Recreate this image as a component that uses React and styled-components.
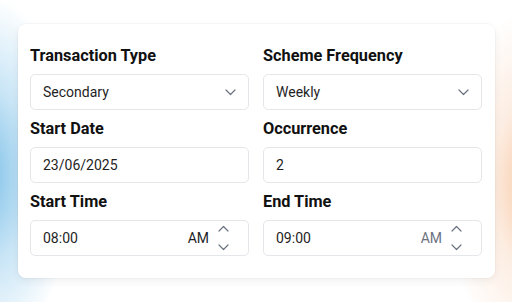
import React from "react";
import styled, { createGlobalStyle } from "styled-components";

const Global = createGlobalStyle`
  html, body { margin: 0; padding: 0; }
  body {
    width: 512px;
    height: 302px;
    overflow: hidden;
    font-family: Roboto, "Liberation Sans", sans-serif;
    background:
      radial-gradient(ellipse 90px 180px at -15px 175px, rgba(125, 192, 232, 1), rgba(165, 212, 240, 0.6) 50%, rgba(255,255,255,0) 100%),
      radial-gradient(ellipse 95px 180px at 540px 185px, rgba(247, 192, 150, 1), rgba(250, 218, 195, 0.5) 50%, rgba(255,255,255,0) 100%),
      #ffffff;
  }
`;

const Page = styled.div`
  padding: 24px 17px 24px 18px;
  box-sizing: border-box;
  width: 512px;
  height: 302px;
`;

const Card = styled.div`
  background: #ffffff;
  border-radius: 8px;
  box-shadow: 0 0 0 1px rgba(0, 0, 0, 0.025), 0 3px 8px rgba(0, 0, 0, 0.06);
  padding: 21px 13px 22px 12px;
  display: grid;
  grid-template-columns: 219px 219px;
  column-gap: 14px;
  row-gap: 8px;
`;

const Field = styled.div`
  display: flex;
  flex-direction: column;
  gap: 8px;
`;

const Label = styled.div`
  font-size: 16.3px;
  font-weight: 700;
  color: #111111;
  line-height: 21px;
  height: 21px;
`;

const Box = styled.div`
  height: 36px;
  box-sizing: border-box;
  border: 1px solid #e4e6ea;
  border-radius: 5px;
  background: #ffffff;
  display: flex;
  align-items: center;
  padding: 0 10px 0 12px;
  font-size: 14px;
  color: #1f1f1f;
`;

const Value = styled.span`
  flex: 1;
`;

const Meridiem = styled.span`
  color: ${(p) => (p.$muted ? "#6b7280" : "#1f1f1f")};
  margin-right: 9px;
`;

const Spinner = styled.div`
  display: flex;
  flex-direction: column;
  justify-content: space-between;
  height: 26px;
  margin-right: 9px;
`;

const Chevron = ({ up }) => (
  <svg width="11" height="7" viewBox="0 0 11 7" fill="none">
    <path
      d={up ? "M1 6L5.5 1.5L10 6" : "M1 1L5.5 5.5L10 1"}
      stroke="#6b7280"
      strokeWidth="1.2"
      strokeLinecap="round"
      strokeLinejoin="round"
    />
  </svg>
);

const SelectIcon = styled.span`
  display: flex;
  margin-right: 2px;
`;

const SelectField = ({ label, value }) => (
  <Field>
    <Label>{label}</Label>
    <Box>
      <Value>{value}</Value>
      <SelectIcon>
        <Chevron />
      </SelectIcon>
    </Box>
  </Field>
);

const TextField = ({ label, value }) => (
  <Field>
    <Label>{label}</Label>
    <Box>
      <Value>{value}</Value>
    </Box>
  </Field>
);

const TimeField = ({ label, value, muted }) => (
  <Field>
    <Label>{label}</Label>
    <Box>
      <Value>{value}</Value>
      <Meridiem $muted={muted}>AM</Meridiem>
      <Spinner>
        <Chevron up />
        <Chevron />
      </Spinner>
    </Box>
  </Field>
);

export default function App() {
  return (
    <>
      <Global />
      <Page>
        <Card>
          <SelectField label="Transaction Type" value="Secondary" />
          <SelectField label="Scheme Frequency" value="Weekly" />
          <TextField label="Start Date" value="23/06/2025" />
          <TextField label="Occurrence" value="2" />
          <TimeField label="Start Time" value="08:00" />
          <TimeField label="End Time" value="09:00" muted />
        </Card>
      </Page>
    </>
  );
}
